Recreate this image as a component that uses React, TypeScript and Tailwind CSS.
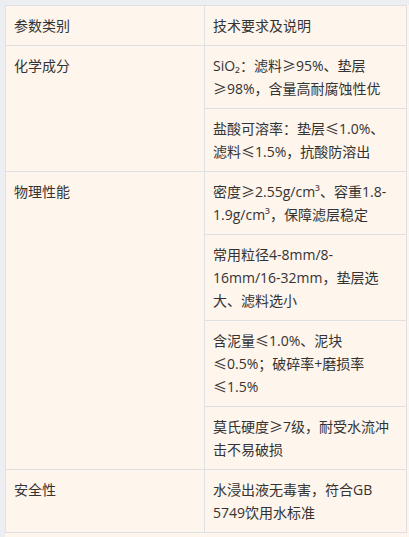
import React from 'react';

type Group = { name: string; items: string[] };

const groups: Group[] = [
  {
    name: '化学成分',
    items: ['SiO₂：滤料≥95%、垫层≥98%，含量高耐腐蚀性优', '盐酸可溶率：垫层≤1.0%、滤料≤1.5%，抗酸防溶出'],
  },
  {
    name: '物理性能',
    items: [
      '密度≥2.55g/cm³、容重1.8-1.9g/cm³，保障滤层稳定',
      '常用粒径4-8mm/8-16mm/16-32mm，垫层选大、滤料选小',
      '含泥量≤1.0%、泥块≤0.5%；破碎率+磨损率≤1.5%',
      '莫氏硬度≥7级，耐受水流冲击不易破损',
    ],
  },
  {
    name: '安全性',
    items: ['水浸出液无毒害，符合GB 5749饮用水标准'],
  },
];

const cell = 'border border-[#dfe0e3] px-2 py-2 align-top text-left font-normal';

// ≤ / ≥ are full width in the reference font, so take them from the CJK face
function Text({ value }: { value: string }) {
  const parts = value.split(/([≤≥])/);
  return (
    <>
      {parts.map((p, i) =>
        p === '≤' || p === '≥' ? (
          <span key={i} className="font-['Noto_Sans_CJK_SC']">
            {p}
          </span>
        ) : (
          <React.Fragment key={i}>{p}</React.Fragment>
        )
      )}
    </>
  );
}

export default function App() {
  return (
    <div
      className="min-h-[537px] w-[409px] bg-[#fef5ec] border-t-[5px] border-l-[5px] border-[#eceef1] text-[14px] leading-[23px] text-[#333333]"
      style={{ fontFamily: '"Open Sans", "Noto Sans CJK SC", sans-serif' }}
    >
      <table className="w-[401px] table-fixed border-collapse">
        <colgroup>
          <col className="w-[199px]" />
          <col className="w-[202px]" />
        </colgroup>
        <thead>
          <tr>
            <th className={cell}>参数类别</th>
            <th className={cell}>技术要求及说明</th>
          </tr>
        </thead>
        <tbody>
          {groups.map((g) =>
            g.items.map((item, i) => (
              <tr key={g.name + i}>
                {i === 0 && (
                  <td rowSpan={g.items.length} className={cell}>
                    {g.name}
                  </td>
                )}
                <td className={cell}>
                  <Text value={item} />
                </td>
              </tr>
            ))
          )}
        </tbody>
      </table>
    </div>
  );
}
